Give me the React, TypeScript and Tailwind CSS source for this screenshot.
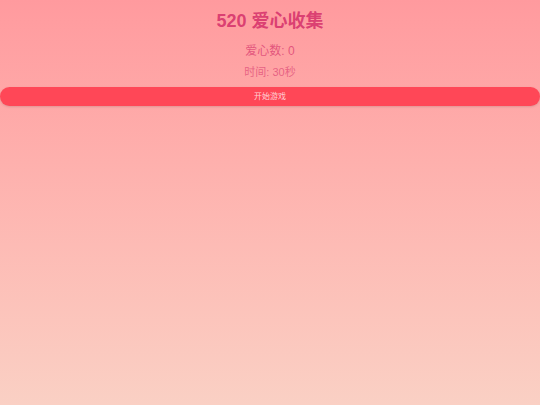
import React from "react";

export default function App() {
  return (
    <div
      className="w-full h-[405px] flex flex-col items-center pt-[10px] bg-gradient-to-b from-[#ff9a9e] to-[#fad0c4]"
      style={{ fontFamily: '"Liberation Sans", "Noto Sans CJK SC", sans-serif' }}
    >
      <h1 className="text-[18px] leading-[22px] font-bold text-[#d6336c]/90">520 爱心收集</h1>
      <div className="mt-[10px] text-[12px] leading-[18px] text-[#d6336c]/70">爱心数: 0</div>
      <div className="mt-[4px] text-[11px] leading-[16px] text-[#d6336c]/60">时间: 30秒</div>
      <button className="mt-[7px] w-full h-[19px] rounded-full bg-[#ff4757] text-[8px] text-white/75 shadow-sm">
        开始游戏
      </button>
    </div>
  );
}
